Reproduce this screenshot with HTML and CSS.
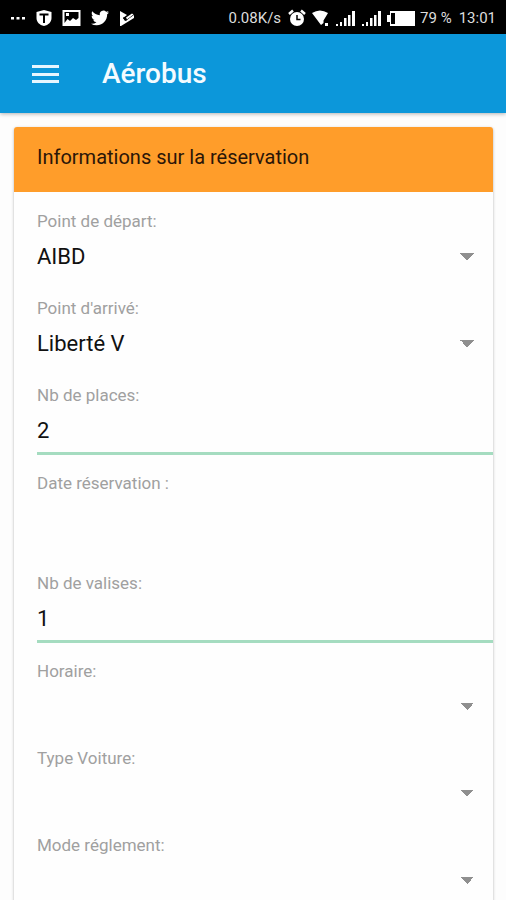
FILE: index.html
```html
<!DOCTYPE html>
<html lang="fr">
<head>
<meta charset="utf-8">
<meta name="viewport" content="width=device-width, initial-scale=1">
<title>Aérobus</title>
<link rel="stylesheet" href="styles.css">
</head>
<body>
<div class="status">
  <div class="status-group notifications">
    <svg width="16" height="16" viewBox="0 0 16 16" aria-hidden="true"><path d="M1 7h3v2.500H1zM6.500 7h3v2.500h-3zM12 7h3v2.500h-3z"/></svg>
    <svg width="16" height="18" viewBox="0 0 16 18" aria-hidden="true"><path fill-rule="evenodd" d="M8 1l7.500 2v6c0 4-3 7-7.500 8-4.500-1-7.500-4-7.500-8V3zM3.500 4.500v2H7V14h2V6.500h3.500v-2z"/></svg>
    <svg width="19" height="18" viewBox="0 0 19 18" aria-hidden="true"><path fill-rule="evenodd" d="M.5 1h18v16H.5zM2.500 3v11l3-4 2.500 2 3-3 3 2 2.500-2V3zM4 4h3v3H4z"/></svg>
    <svg width="18" height="18" viewBox="0 0 24 24" aria-hidden="true"><path d="M23.950 4.570a10 10 0 0 1-2.820.77 4.960 4.960 0 0 0 2.160-2.720c-.95.550-2 .950-3.130 1.180a4.920 4.920 0 0 0-8.380 4.480C7.690 8.090 4.070 6.130 1.640 3.160a4.820 4.820 0 0 0-.67 2.480c0 1.710.87 3.210 2.190 4.100a4.900 4.900 0 0 1-2.230-.620v.060a4.920 4.920 0 0 0 3.950 4.830 5 5 0 0 1-2.210.080 4.940 4.940 0 0 0 4.600 3.420A9.870 9.870 0 0 1 0 19.540a14 14 0 0 0 7.550 2.210c9.050 0 14-7.500 14-13.980 0-.210 0-.420-.020-.630a9.900 9.900 0 0 0 2.420-2.570z"/></svg>
    <svg width="16" height="18" viewBox="0 0 16 18" aria-hidden="true"><path d="M1 2l7 4-4 3 2 3 9-6v3L2 17H1z"/><path d="M4.500 8.500l2.500 2.500 7-6" fill="none" stroke="#000" stroke-width="1.500"/><path d="M7 8.500l6-4 1.500 1-6.500 5z"/></svg>
  </div>
  <div class="status-group system">
    <span class="speed">0.08K/s</span>
    <svg width="18" height="18" viewBox="0 0 18 18" aria-hidden="true"><circle cx="9" cy="10" r="7"/><path d="M1 5l4-3.500M17 5l-4-3.500" stroke="#fff" stroke-width="2.500"/><path d="M9 6v4.500h3.500" fill="none" stroke="#000" stroke-width="1.500"/></svg>
    <svg width="19" height="18" viewBox="0 0 19 18" aria-hidden="true"><path d="M1 4q8-5 16 0L12.500 11.500V14L10 16zM14 14h3v3h-3z"/></svg>
    <svg width="21" height="18" viewBox="0 0 21 18" aria-hidden="true"><path d="M1 15h2v2H1zM5 13h2v4H5zM9 9h2.500v8H9zM13 6h2.500v11H13zM17 2h3v15h-3z"/></svg>
    <svg width="21" height="18" viewBox="0 0 21 18" aria-hidden="true"><path d="M1 15h2v2H1zM5 13h2v4H5zM9 9h2.500v8H9zM13 6h2.500v11H13zM17 2h3v15h-3z"/></svg>
    <svg width="28" height="18" viewBox="0 0 28 18" aria-hidden="true"><path fill-rule="evenodd" d="M3 2h25v15H3v-4H0V6h3zM4 4v11h4V4z"/></svg>
    <span class="percent">79 %</span>
    <span>13:01</span>
  </div>
</div>
<header class="appbar">
  <button class="menu" type="button" aria-label="Menu"><svg width="28" height="20" viewBox="0 0 28 20" aria-hidden="true"><path d="M0 1h27v3H0zM0 9h27v3H0zM0 16h27v3H0z"/></svg></button>
  <h1>Aérobus</h1>
</header>
<main>
  <form class="card">
    <h2>Informations sur la réservation</h2>
    <div class="fields">
      <div class="field"><label for="depart">Point de départ:</label><select id="depart"><option>AIBD</option></select></div>
      <div class="field"><label for="arrive">Point d'arrivé:</label><select id="arrive"><option>Liberté V</option></select></div>
      <div class="field"><label for="places">Nb de places:</label><input class="number" id="places" type="text" inputmode="numeric" value="2"></div>
      <div class="field"><label for="date">Date réservation :</label><input class="date" id="date" type="text"></div>
      <div class="field"><label for="valises">Nb de valises:</label><input class="number" id="valises" type="text" inputmode="numeric" value="1"></div>
      <div class="field"><label for="horaire">Horaire:</label><select id="horaire"><option></option></select></div>
      <div class="field"><label for="voiture">Type Voiture:</label><select id="voiture"><option></option></select></div>
      <div class="field"><label for="reglement">Mode réglement:</label><select id="reglement"><option></option></select></div>
    </div>
  </form>
</main>
</body>
</html>
```
FILE: styles.css
```css
* { box-sizing: border-box; }
body {
  margin: 0;
  background: #fdfdfd;
  color: #111;
  font-family: Roboto, sans-serif;
}
.status {
  display: flex;
  justify-content: space-between;
  align-items: center;
  height: 34px;
  padding: 2px 10px 0;
  background: #000;
  color: #ddd;
  font-size: 15px;
}
.status svg { fill: #fff; flex: none; }
.status-group { display: flex; align-items: center; }
.notifications { gap: 10px; }
.system { gap: 5px; white-space: nowrap; }
.speed { margin-right: 2px; }
.percent { margin-right: 2px; }
.appbar {
  display: flex;
  align-items: center;
  gap: 42px;
  height: 79px;
  padding: 0 32px;
  background: #0c97da;
  color: #f4fbff;
  box-shadow: 0 1px 4px rgba(0, 0, 0, 0.3);
}
.menu {
  display: flex;
  padding: 0;
  border: 0;
  background: none;
}
.menu svg { fill: #e6f6ff; }
h1 {
  margin: 0;
  font-size: 28px;
  font-weight: 500;
  line-height: 32px;
}
main { padding: 14px 13px 0 14px; }
.card {
  border-radius: 3px;
  background: #fefefe;
  box-shadow: 0 1px 3px rgba(0, 0, 0, 0.3);
  overflow: hidden;
}
h2 {
  margin: 0;
  padding: 18px 23px 23px;
  background: #ff9d2a;
  color: #2b1608;
  font-size: 20px;
  font-weight: 400;
  line-height: 24px;
}
.fields { padding: 1px 0 0 23px; }
.field {
  display: flex;
  flex-direction: column;
  gap: 3px;
  padding-top: 18px;
}
label {
  color: #a0a0a0;
  font-size: 17px;
  line-height: 20px;
}
select, input {
  width: 100%;
  height: 44px;
  margin: 0;
  padding: 0;
  border: 0;
  border-radius: 0;
  outline: 0;
  background: transparent;
  color: #111;
  font: 22px Roboto, sans-serif;
}
select {
  margin-bottom: 2px;
  padding-right: 40px;
  appearance: none;
  background: conic-gradient(from -45deg at 50% 100%, #8f8f8f 90deg, transparent 0) right 19px center / 14px 7px no-repeat;
}
.number {
  height: 47px;
  border-bottom: 3px solid #a5dcc0;
}
.date { height: 59px; }
```
